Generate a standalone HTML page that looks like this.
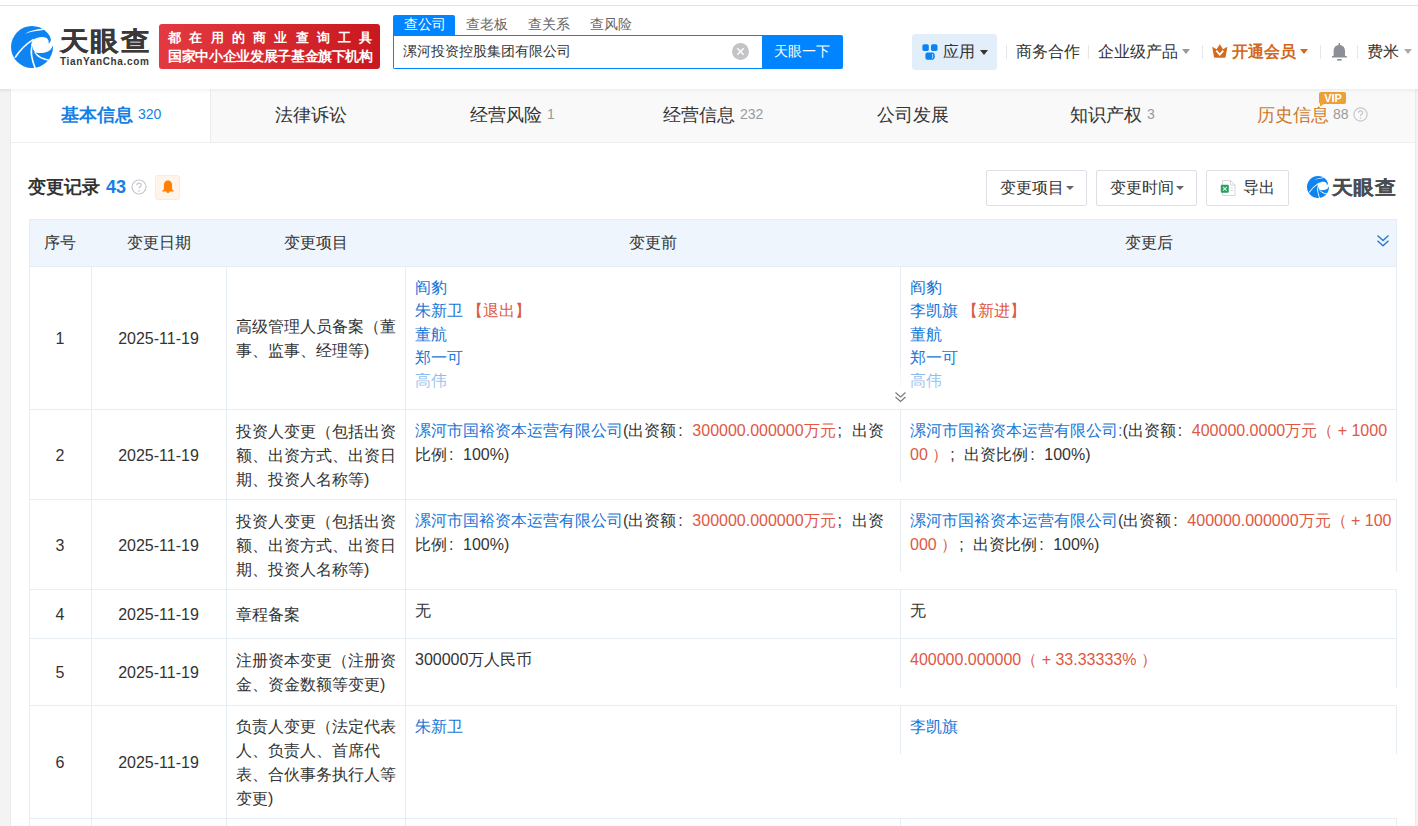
<!DOCTYPE html>
<html><head><meta charset="utf-8">
<style>
*{margin:0;padding:0;box-sizing:border-box}
html,body{width:1418px;height:826px;overflow:hidden}
body{background:#f3f3f3;font-family:"Liberation Sans",sans-serif;color:#333;position:relative}
.a{position:absolute;white-space:nowrap}
#hdr{position:absolute;left:0;top:0;width:1418px;height:89px;background:#fff;box-shadow:0 1px 3px rgba(0,0,0,.06)}
#topline{position:absolute;left:0;top:5px;width:1418px;height:1px;background:#e3e3e3}
.sep{position:absolute;width:1px;height:14px;top:45px;background:#e6e6e6}
.caret{position:absolute;width:0;height:0;border-left:4px solid transparent;border-right:4px solid transparent;border-top:4px solid #999}
#card{position:absolute;left:11px;top:89px;width:1404px;height:737px;background:#fff}
#tabbar{position:absolute;left:11px;top:89px;width:1404px;height:54px;background:#f9f9f9;border-bottom:1px solid #efefef}
.tab{position:absolute;top:103px;font-size:18px;color:#333;line-height:24px}
.tab .n{font-size:14px;color:#999;margin-left:5px;position:relative;top:-2px}
.btn{position:absolute;top:170px;height:36px;border:1px solid #dcdfe6;border-radius:2px;background:#fff}
.btn span{position:absolute;font-size:16px;line-height:20px;top:7px;color:#333}
.hl{position:absolute;background:#e6edf3}
.t{position:absolute;font-size:16px;line-height:24px;color:#333;white-space:nowrap;margin-top:1px}
.th{position:absolute;font-size:16px;line-height:20px;color:#333;top:233px;white-space:nowrap}
.b{color:#1877d8}
.r{color:#de5844}
.c{display:inline-block;width:16px;padding-left:2px}
</style></head><body>
<div id="hdr"></div>
<div id="topline"></div>
<svg viewBox="0 0 42 42" width="42" height="42" style="position:absolute;left:11px;top:26px">
<circle cx="21" cy="21" r="21" fill="#0d84f2"/>
<path d="M22.4,13.4 C25,12 28,10.9 31,10.9 C34,10.9 36.6,12 37.4,14.2 C37.9,15.5 37.8,16.5 37.4,17.6 C38.9,16.8 40,15.2 39.8,13.2 C39.4,9 36.5,5.6 32.3,3.1 L44,-1 L44,19.3 L41.9,19.5 C41,22.5 39,24.6 36.3,25.8 C33.5,27 29.5,27.3 25.6,26.8 C24.8,26.7 24.2,26.4 23.8,26 C22.6,24.5 21.8,22.5 21.6,20.5 L20.1,20.5 C20.1,18 20.6,15.5 22.4,13.4 Z" fill="#fff"/>
<path d="M20.1,20.5 C19.3,24 19.3,28 20.1,31 C20.7,34.5 21.8,38 23.4,42.5 L25.2,42.5 C23.4,38 22.4,34.5 21.7,31 C21.1,28 21.1,24 21.6,20.5 Z" fill="#fff"/>
<path d="M3.3,31.2 Q10.8,19.7 22.1,12.7 L22.9,14.1 Q11.9,21 4.8,32.1 Z" fill="#fff"/>
<path d="M14,7.7 Q20.2,3.7 32.6,2.5 L32.6,4 Q20.9,5.1 14,7.7 Z" fill="#fff"/>
<path d="M23.3,26.5 Q27.1,33.1 37.8,35 L38.1,33.4 Q28.3,31.7 24.0,25.7 Z" fill="#fff"/>
</svg>
<div class="a" style="left:60px;top:26px;font-size:26px;line-height:30px;font-weight:bold;color:#3b3838;letter-spacing:1.6px;-webkit-text-stroke:0.3px #3b3838;transform:scaleX(1.1);transform-origin:0 0">天眼查</div>
<div class="a" style="left:60px;top:56px;font-size:10px;line-height:12px;font-weight:bold;color:#3b3838;letter-spacing:0.65px">TianYanCha.com</div>
<div class="a" style="left:159px;top:24px;width:221px;height:45px;border-radius:3px;background:linear-gradient(90deg,#e23a40,#c9181f)"></div>
<div class="a" style="left:168px;top:29px;font-size:13px;line-height:17px;font-weight:bold;color:#fff;letter-spacing:8.25px">都在用的商业查询工具</div>
<div class="a" style="left:168px;top:48px;font-size:14px;line-height:17px;font-weight:bold;color:#fff;letter-spacing:-0.35px">国家中小企业发展子基金旗下机构</div>
<div class="a" style="left:393px;top:15px;width:62px;height:21px;background:#0084ff;border-radius:2px 2px 0 0"></div>
<div class="a" style="left:404px;top:15px;font-size:14px;line-height:19px;color:#fff">查公司</div>
<div class="a" style="left:466px;top:15px;font-size:14px;line-height:19px;color:#666">查老板</div>
<div class="a" style="left:528px;top:15px;font-size:14px;line-height:19px;color:#666">查关系</div>
<div class="a" style="left:590px;top:15px;font-size:14px;line-height:19px;color:#666">查风险</div>
<div class="a" style="left:393px;top:35px;width:370px;height:34px;border:1px solid #0084ff;border-right:none;border-radius:0 0 0 2px;background:#fff"></div>
<div class="a" style="left:403px;top:42px;font-size:13.5px;line-height:20px;color:#333">漯河投资控股集团有限公司</div>
<div class="a" style="left:732px;top:43px;width:17px;height:17px;border-radius:50%;background:#c3c4c8"></div>
<svg class="a" style="left:732px;top:43px" width="17" height="17"><path d="M5.3,5.3 L11.7,11.7 M11.7,5.3 L5.3,11.7" stroke="#fff" stroke-width="1.4"/></svg>
<div class="a" style="left:762px;top:35px;width:81px;height:34px;background:#0084ff;border-radius:0 2px 2px 0"></div>
<div class="a" style="left:774px;top:41px;font-size:14px;line-height:20px;color:#fff">天眼一下</div>

<div class="a" style="left:912px;top:34px;width:85px;height:36px;border-radius:3px;background:#e3eefb"></div>
<svg class="a" style="left:922px;top:44px" width="17" height="17"><rect x="0.4" y="0.3" width="6.4" height="6.6" rx="1.6" fill="#0a84f5"/><rect x="9" y="0.3" width="6.5" height="6.6" rx="1.6" fill="#0a84f5"/><path d="M5.4,8.6 L10.2,8.6 C12,8.6 12.8,10.3 12.8,12.15 C12.8,14 12,15.7 10.2,15.7 L5.4,15.7 Q3.4,15.7 3.4,13.7 L3.4,10.6 Q3.4,8.6 5.4,8.6 Z" fill="#0a84f5"/><path d="M10.4,10 Q11.2,12.15 10.4,14.3" stroke="#bfe6ff" stroke-width="0.9" fill="none"/></svg>
<div class="a" style="left:943px;top:41px;font-size:16px;line-height:22px;color:#333">应用</div>
<div class="caret" style="left:980px;top:50px;border-top-color:#333;border-left-width:4px;border-right-width:4px;border-top-width:5px"></div>
<div class="sep" style="left:1006px"></div>
<div class="a" style="left:1016px;top:41px;font-size:16px;line-height:22px;color:#333">商务合作</div>
<div class="sep" style="left:1088px"></div>
<div class="a" style="left:1098px;top:41px;font-size:16px;line-height:22px;color:#333">企业级产品</div>
<div class="caret" style="left:1182px;top:49px;border-top-color:#999;border-top-width:5px"></div>
<div class="sep" style="left:1202px"></div>
<svg class="a" style="left:1212px;top:44px" width="16" height="14"><path d="M0.2,2.8 L4.6,5.2 L7.8,0.2 L11,5.2 L15.4,2.8 L13.6,13 Q13.4,13.8 12.6,13.8 L3,13.8 Q2.2,13.8 2,13 Z" fill="#d6691a"/><path d="M4.3,6.6 L7.8,10.6 L11.3,6.6" stroke="#fff" stroke-width="1.7" fill="none"/></svg>
<div class="a" style="left:1232px;top:41px;font-size:16px;line-height:22px;color:#d2691b;font-weight:bold">开通会员</div>
<div class="caret" style="left:1300px;top:49px;border-top-color:#d2691b;border-top-width:5px"></div>
<div class="sep" style="left:1320px"></div>
<svg class="a" style="left:1331px;top:42px" width="17" height="20"><rect x="7.6" y="1" width="1.4" height="2.6" fill="#8c9096"/><path d="M2.6,14.2 L2.6,9 C2.6,5.2 5,3 8.3,3 C11.6,3 14,5.2 14,9 L14,14.2 Z" fill="#8c9096"/><rect x="0.9" y="13.9" width="15" height="1.7" rx="0.5" fill="#8c9096"/><rect x="6.1" y="17" width="4.6" height="1.6" fill="#8c9096"/></svg>
<div class="sep" style="left:1357px"></div>
<div class="a" style="left:1367px;top:41px;font-size:16px;line-height:22px;color:#333">费米</div>
<div class="caret" style="left:1404px;top:49px;border-top-color:#aaa;border-top-width:5px"></div>


<div id="card"></div>
<div class="a" style="left:10px;top:89px;width:1px;height:737px;background:#ebebeb"></div>
<div class="a" style="left:1415px;top:89px;width:1px;height:737px;background:#ebebeb"></div>
<div id="tabbar"></div>
<div class="a" style="left:11px;top:89px;width:200px;height:53px;background:#fff;border-right:1px solid #ececec"></div>
<div class="a" style="left:0;top:89px;width:1418px;height:4px;background:linear-gradient(180deg,rgba(0,0,0,.045),rgba(0,0,0,0))"></div>
<div class="tab a" style="left:61px;color:#167fe6;font-weight:bold">基本信息<span class="n" style="color:#167fe6;font-weight:normal">320</span></div>
<div class="tab a" style="left:275px">法律诉讼</div>
<div class="tab a" style="left:470px">经营风险<span class="n">1</span></div>
<div class="tab a" style="left:663px">经营信息<span class="n">232</span></div>
<div class="tab a" style="left:877px">公司发展</div>
<div class="tab a" style="left:1070px">知识产权<span class="n">3</span></div>
<div class="tab a" style="left:1257px;color:#cd7a2c">历史信息<span class="n" style="margin-left:4px">88</span></div>
<svg class="a" style="left:1353px;top:107px" width="15" height="15"><circle cx="7.5" cy="7.5" r="6.6" stroke="#c4c7cc" stroke-width="1.2" fill="none"/><path d="M5.4,5.9 Q5.5,3.9 7.5,3.9 Q9.6,3.9 9.6,5.7 Q9.6,6.9 8.2,7.6 Q7.5,8 7.5,9" stroke="#c4c7cc" stroke-width="1.2" fill="none"/><circle cx="7.5" cy="11" r="0.8" fill="#c4c7cc"/></svg>
<svg class="a" style="left:1319px;top:92px" width="28" height="15"><path d="M2,0 L25,0 Q27,0 27,2 L27,10 Q27,12 25,12 L5,12 L1,14.5 L1,11.5 Q0,11 0,10 L0,2 Q0,0 2,0 Z" fill="#eca035"/><text x="14" y="10.3" font-family="Liberation Sans" font-size="11" font-weight="bold" fill="#fff" text-anchor="middle">VIP</text></svg>

<div class="a" style="left:28px;top:175px;font-size:18px;line-height:24px;font-weight:bold;color:#333">变更记录</div>
<div class="a" style="left:106px;top:175px;font-size:18px;line-height:24px;font-weight:bold;color:#167fe6">43</div>
<svg class="a" style="left:131px;top:179px" width="16" height="16"><circle cx="8" cy="8" r="7" stroke="#c4c7cc" stroke-width="1.2" fill="none"/><path d="M5.8,6.3 Q5.9,4.2 8,4.2 Q10.2,4.2 10.2,6.1 Q10.2,7.3 8.7,8.1 Q8,8.5 8,9.6" stroke="#c4c7cc" stroke-width="1.2" fill="none"/><circle cx="8" cy="11.8" r="0.85" fill="#c4c7cc"/></svg>
<div class="a" style="left:155px;top:175px;width:25px;height:25px;background:#fff4e9;border:1px solid #fcebd9;border-radius:3px"></div>
<svg class="a" style="left:161px;top:180px" width="14" height="14"><path d="M7,0.6 C9.9,0.6 11.1,2.8 11.1,5.6 L11.1,9.6 L12.9,11.1 L12.9,11.6 L1.1,11.6 L1.1,11.1 L2.9,9.6 L2.9,5.6 C2.9,2.8 4.1,0.6 7,0.6 Z" fill="#ff7f00"/><circle cx="7" cy="11.6" r="1.5" fill="#ff7f00"/></svg>

<div class="btn" style="left:986px;width:101px"><span style="left:13px">变更项目</span></div>
<div class="caret" style="left:1066px;top:186px;border-top-color:#666"></div>
<div class="btn" style="left:1096px;width:101px"><span style="left:13px">变更时间</span></div>
<div class="caret" style="left:1176px;top:186px;border-top-color:#666"></div>
<div class="btn" style="left:1206px;width:83px"><span style="left:36px">导出</span></div>
<svg class="a" style="left:1219px;top:179px" width="18" height="18"><path d="M3.5,1.5 L11.5,1.5 L16,6 L16,16.5 L3.5,16.5 Z" fill="#fff" stroke="#d3d6db" stroke-width="1"/><path d="M11.5,1.5 L11.5,6 L16,6" fill="none" stroke="#d3d6db" stroke-width="1"/><rect x="1.8" y="5.8" width="8" height="8" rx="1" fill="#2e9e62"/><path d="M3.9,7.9 L7.7,11.7 M7.7,7.9 L3.9,11.7" stroke="#c9f7d9" stroke-width="1.1"/><path d="M11.5,9 L14,9 M11.5,11.5 L14,11.5" stroke="#d5d8dc" stroke-width="1.2"/></svg>
<svg viewBox="0 0 42 42" width="22" height="22" style="position:absolute;left:1307px;top:176px">
<circle cx="21" cy="21" r="21" fill="#0d84f2"/>
<path d="M22.4,13.4 C25,12 28,10.9 31,10.9 C34,10.9 36.6,12 37.4,14.2 C37.9,15.5 37.8,16.5 37.4,17.6 C38.9,16.8 40,15.2 39.8,13.2 C39.4,9 36.5,5.6 32.3,3.1 L44,-1 L44,19.3 L41.9,19.5 C41,22.5 39,24.6 36.3,25.8 C33.5,27 29.5,27.3 25.6,26.8 C24.8,26.7 24.2,26.4 23.8,26 C22.6,24.5 21.8,22.5 21.6,20.5 L20.1,20.5 C20.1,18 20.6,15.5 22.4,13.4 Z" fill="#fff"/>
<path d="M20.1,20.5 C19.3,24 19.3,28 20.1,31 C20.7,34.5 21.8,38 23.4,42.5 L25.2,42.5 C23.4,38 22.4,34.5 21.7,31 C21.1,28 21.1,24 21.6,20.5 Z" fill="#fff"/>
<path d="M3.3,31.2 Q10.8,19.7 22.1,12.7 L22.9,14.1 Q11.9,21 4.8,32.1 Z" fill="#fff"/>
<path d="M14,7.7 Q20.2,3.7 32.6,2.5 L32.6,4 Q20.9,5.1 14,7.7 Z" fill="#fff"/>
<path d="M23.3,26.5 Q27.1,33.1 37.8,35 L38.1,33.4 Q28.3,31.7 24.0,25.7 Z" fill="#fff"/>
</svg>
<div class="a" style="left:1332px;top:175px;font-size:19px;line-height:26px;font-weight:900;color:#4a4c50;letter-spacing:0.4px;-webkit-text-stroke:0.2px #4a4c50;transform:scaleX(1.1);transform-origin:0 0">天眼查</div>
<div class="a" style="left:29px;top:219px;width:1368px;height:47px;background:#eef5fc;border-top:1px solid #e5ecf2"></div>
<div class="hl" style="left:29px;top:266px;width:1368px;height:1px"></div>
<div class="hl" style="left:29px;top:409px;width:1368px;height:1px"></div>
<div class="hl" style="left:29px;top:499px;width:1368px;height:1px"></div>
<div class="hl" style="left:29px;top:589px;width:1368px;height:1px"></div>
<div class="hl" style="left:29px;top:638px;width:1368px;height:1px"></div>
<div class="hl" style="left:29px;top:705px;width:1368px;height:1px"></div>
<div class="hl" style="left:29px;top:818px;width:1368px;height:1px"></div>
<div class="hl" style="left:29px;top:219px;width:1px;height:607px"></div>
<div class="hl" style="left:1396px;top:219px;width:1px;height:607px"></div>
<div class="hl" style="left:91px;top:266px;width:1px;height:560px"></div>
<div class="hl" style="left:226px;top:266px;width:1px;height:560px"></div>
<div class="hl" style="left:405px;top:266px;width:1px;height:560px"></div>
<div class="hl" style="left:900px;top:266px;width:1px;height:560px"></div>
<div class="th" style="left:-40.0px;width:200px;text-align:center">序号</div>
<div class="th" style="left:58.5px;width:200px;text-align:center">变更日期</div>
<div class="th" style="left:215.5px;width:200px;text-align:center">变更项目</div>
<div class="th" style="left:553.0px;width:200px;text-align:center">变更前</div>
<div class="th" style="left:1048.5px;width:200px;text-align:center">变更后</div>
<svg class="a" style="left:1376px;top:234px" width="14" height="14"><path d="M1.5,1.6 L7,6.6 L12.5,1.6 M1.5,6.8 L7,11.8 L12.5,6.8" stroke="#2a7ad4" stroke-width="1.4" fill="none"/></svg>
<div class="t" style="left:29px;width:62px;text-align:center;top:326.0px">1</div>
<div class="t" style="left:91px;width:135px;text-align:center;top:326.0px">2025-11-19</div>
<div class="t" style="left:236px;top:314.0px">高级管理人员备案（董<br>事、监事、经理等)</div>
<div class="t" style="left:29px;width:62px;text-align:center;top:442.5px">2</div>
<div class="t" style="left:91px;width:135px;text-align:center;top:442.5px">2025-11-19</div>
<div class="t" style="left:236px;top:418.5px">投资人变更（包括出资<br>额、出资方式、出资日<br>期、投资人名称等)</div>
<div class="t" style="left:29px;width:62px;text-align:center;top:532.5px">3</div>
<div class="t" style="left:91px;width:135px;text-align:center;top:532.5px">2025-11-19</div>
<div class="t" style="left:236px;top:508.5px">投资人变更（包括出资<br>额、出资方式、出资日<br>期、投资人名称等)</div>
<div class="t" style="left:29px;width:62px;text-align:center;top:602.0px">4</div>
<div class="t" style="left:91px;width:135px;text-align:center;top:602.0px">2025-11-19</div>
<div class="t" style="left:236px;top:602.0px">章程备案</div>
<div class="t" style="left:29px;width:62px;text-align:center;top:660.0px">5</div>
<div class="t" style="left:91px;width:135px;text-align:center;top:660.0px">2025-11-19</div>
<div class="t" style="left:236px;top:648.0px">注册资本变更（注册资<br>金、资金数额等变更)</div>
<div class="t" style="left:29px;width:62px;text-align:center;top:750.0px">6</div>
<div class="t" style="left:91px;width:135px;text-align:center;top:750.0px">2025-11-19</div>
<div class="t" style="left:236px;top:714.0px">负责人变更（法定代表<br>人、负责人、首席代<br>表、合伙事务执行人等<br>变更)</div>
<div class="t" style="left:415px;top:274.8px;line-height:23.4px"><span class="b">阎豹</span><br><span class="b">朱新卫</span> <span class="r">【退出】</span><br><span class="b">董航</span><br><span class="b">郑一可</span><br><span class="b">高伟</span></div>
<div class="t" style="left:910px;top:274.8px;line-height:23.4px"><span class="b">阎豹</span><br><span class="b">李凯旗</span> <span class="r">【新进】</span><br><span class="b">董航</span><br><span class="b">郑一可</span><br><span class="b">高伟</span></div>
<div class="a" style="left:406px;top:368px;width:990px;height:41px;background:linear-gradient(180deg,rgba(255,255,255,.45),rgba(255,255,255,.62) 50%,#fff 90%)"></div>
<div class="a" style="left:893px;top:388px;width:15px;height:21px;background:#fff"></div>
<svg class="a" style="left:894px;top:391px" width="13" height="13"><path d="M1.5,1.5 L6.5,6 L11.5,1.5 M1.5,6 L6.5,10.5 L11.5,6" stroke="#777" stroke-width="1.1" fill="none"/></svg>
<div class="t" style="left:415px;top:418px"><span class="b">漯河市国裕资本运营有限公司</span>(出资额<span class="c">:</span><span class="r">300000.000000万元</span><span class="c">;</span>出资<br>比例<span class="c">:</span>100%)</div>
<div class="t" style="left:415px;top:508px"><span class="b">漯河市国裕资本运营有限公司</span>(出资额<span class="c">:</span><span class="r">300000.000000万元</span><span class="c">;</span>出资<br>比例<span class="c">:</span>100%)</div>
<div class="t" style="left:910px;top:418px"><span class="b">漯河市国裕资本运营有限公司:</span>(出资额<span class="c">:</span><span class="r">400000.0000万元（ + 1000</span><br><span class="r">00 ）</span><span class="c">;</span>出资比例<span class="c">:</span>100%)</div>
<div class="t" style="left:910px;top:508px"><span class="b">漯河市国裕资本运营有限公司</span>(出资额<span class="c">:</span><span class="r">400000.000000万元（ + 100</span><br><span class="r">000 ）</span><span class="c">;</span>出资比例<span class="c">:</span>100%)</div>
<div class="t" style="left:415px;top:598px">无</div>
<div class="t" style="left:910px;top:598px">无</div>
<div class="t" style="left:415px;top:647px">300000万人民币</div>
<div class="t r" style="left:910px;top:647px">400000.000000（ + 33.33333% ）</div>
<div class="t b" style="left:415px;top:714px">朱新卫</div>
<div class="t b" style="left:910px;top:714px">李凯旗</div>
<div class="a" style="left:899px;top:482px;width:500px;height:17px;background:#fff"></div>
<div class="a" style="left:899px;top:572px;width:500px;height:17px;background:#fff"></div>
<div class="a" style="left:899px;top:688px;width:500px;height:17px;background:#fff"></div>
<div class="a" style="left:899px;top:754px;width:500px;height:64px;background:#fff"></div>
</body></html>
